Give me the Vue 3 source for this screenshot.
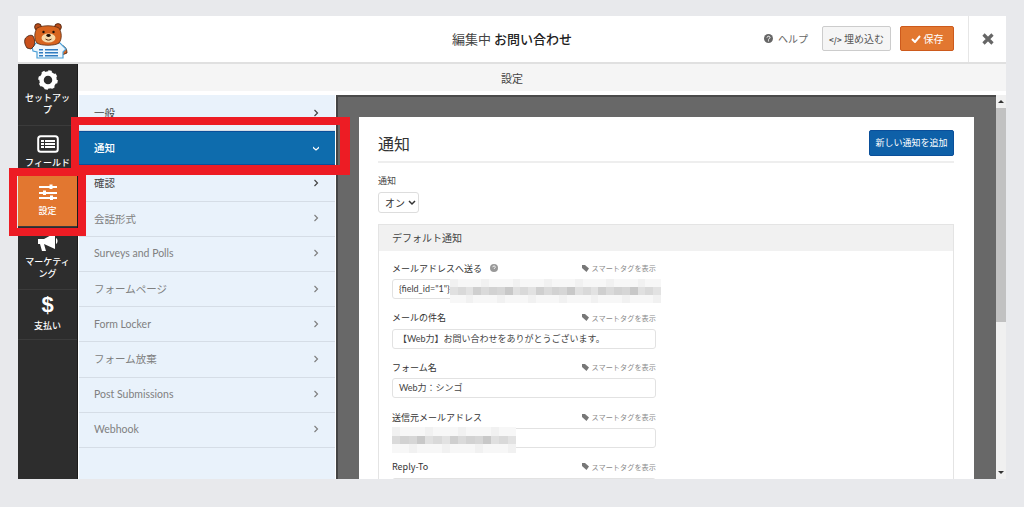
<template>
  <div class="frame">
    <header class="topbar">
      <div class="logo">
        <svg width="44" height="38" viewBox="0 0 44 38">
          <path d="M37 23c4 1 6 4 6 8l-5 2z" fill="#d8641f" stroke="#3d1d0d" stroke-width=".8" />
          <path d="M12 21h24l6 6-3 3v6H13v-6l-4-1-1-4z" fill="#eef7fd" stroke="#4b9fd6" stroke-width="1.200" />
          <path d="M3 26c-2-3-3-6-2-9 1-2 2-2 3-3 2-1 4-1 5 0 2 3 2 7 1 10l-3 3z" fill="#c9501c" stroke="#3d1d0d" stroke-width=".8" />
          <circle cx="14" cy="5" r="3.400" fill="#b94c18" stroke="#3d1d0d" stroke-width=".8" />
          <circle cx="34" cy="5" r="3.400" fill="#b94c18" stroke="#3d1d0d" stroke-width=".8" />
          <path d="M13 6c6-3 16-3 22 0 3 5 3 11 0 15-4 3-18 3-22 0-3-4-3-10 0-15z" fill="#d8641f" stroke="#5a2a10" stroke-width=".8" />
          <ellipse cx="24.500" cy="16" rx="7" ry="4.500" fill="#f8d9a8" />
          <circle cx="19.500" cy="10" r="1.200" fill="#1d1008" />
          <circle cx="29.500" cy="10" r="1.200" fill="#1d1008" />
          <ellipse cx="24.500" cy="13.500" rx="2.200" ry="1.400" fill="#1d1008" />
          <path d="M21.500 17c2 1.500 4 1.500 6 0" fill="none" stroke="#5a2a10" stroke-width="1" />
          <path d="M15 27h4v1.500h-4zM21 27h13v1.500H21zM15 30h4v1.500h-4zM21 30h13v1.500H21zM15 33h4v1.500h-4zM21 33h13v1.500H21z" fill="#2f7cc1" />
        </svg>
      </div>
      <h1 class="form-title"><span class="editing">編集中</span> お問い合わせ</h1>
      <div class="actions">
        <span class="help">
          <svg width="9" height="9" viewBox="0 0 10 10">
            <circle cx="5" cy="5" r="5" fill="#666" />
            <path d="M3.400 4c0-2 3.400-2 3.300 0 0 1.200-1.700 1-1.700 2.200" fill="none" stroke="#fff" stroke-width="1.100" />
            <rect x="4.400" y="7" width="1.200" height="1.200" fill="#fff" />
          </svg>
          ヘルプ
        </span>
        <button class="btn-embed"><b>&lt;/&gt;</b> 埋め込む</button>
        <button class="btn-save">
          <svg width="10" height="8" viewBox="0 0 10 8"><path d="M1 4l3 3 5-6" fill="none" stroke="#fff" stroke-width="2" /></svg>
          保存
        </button>
      </div>
      <div class="close">
        <svg width="12" height="12" viewBox="0 0 12 12"><path d="M1.500 1.500l9 9M10.500 1.500l-9 9" stroke="#666" stroke-width="3.200" /></svg>
      </div>
    </header>

    <div class="workspace">
      <nav class="sidebar">
        <div class="side-item setup">
          <svg width="20" height="20" viewBox="0 0 20 20">
            <circle cx="10" cy="10" r="6.500" fill="none" stroke="#fff" stroke-width="4.500" />
            <circle cx="10" cy="10" r="8.600" fill="none" stroke="#fff" stroke-width="2.400" stroke-dasharray="3.400 3.350" />
          </svg>
          <span>セットアップ</span>
        </div>
        <div class="side-item fields">
          <svg width="22" height="18" viewBox="0 0 22 18">
            <rect x="1.200" y="1.200" width="19.600" height="15.600" rx="2.500" fill="#2d2d2d" stroke="#fff" stroke-width="2" />
            <path d="M4 5h3v2H4zM8 5h10v2H8zM4 8h3v2H4zM8 8h10v2H8zM4 11h3v2H4zM8 11h10v2H8z" fill="#fff" />
          </svg>
          <span>フィールド</span>
        </div>
        <div class="side-item active">
          <svg width="18" height="17" viewBox="0 0 18 17">
            <path d="M0 2h18v2H0zM0 8h18v2H0zM0 13h18v2H0z" fill="#fff" />
            <path d="M10.500 .5h3v4.500h-3zM4 6.500h3V11H4zM11 11.500h3V16h-3z" fill="#fff" />
          </svg>
          <span>設定</span>
        </div>
        <div class="side-item marketing">
          <svg width="22" height="20" viewBox="0 0 22 20">
            <path d="M1 7h6L18 1v16L7 12H1zM3 12h4l2 7H5zM19 6c2 1 2 5 0 6z" fill="#fff" />
          </svg>
          <span>マーケティング</span>
        </div>
        <div class="side-item payments">
          <b class="dollar">$</b>
          <span>支払い</span>
        </div>
      </nav>

      <div class="main">
        <div class="subbar">設定</div>
        <div class="split">
          <aside class="panel-list">
            <div
              v-for="item in sections"
              :key="item.label"
              class="section-row"
              :class="{ current: item.current, strong: item.strong }"
            >
              <span>{{ item.label }}</span>
              <svg width="6" height="8" viewBox="0 0 6 8">
                <path v-if="item.current" d="M-1 2.500l4 3.500 4-3.500" fill="none" stroke="#fff" stroke-width="1.200" />
                <path v-else d="M1.500 1l3 3-3 3" fill="none" stroke="currentColor" stroke-width="1.200" />
              </svg>
            </div>
          </aside>

          <section class="canvas">
            <div class="sheet">
              <div class="sheet-head">
                <h2>通知</h2>
                <button class="btn-add">新しい通知を追加</button>
              </div>
              <label class="small-label">通知</label>
              <div class="select">オン
                <svg width="8" height="6" viewBox="0 0 8 6"><path d="M1 1l3 3 3-3" fill="none" stroke="#333" stroke-width="1.500" /></svg>
              </div>
              <div class="notify-box">
                <div class="notify-title">デフォルト通知</div>
                <div class="notify-body">
                  <div v-for="field in fields" :key="field.label" class="field">
                    <div class="field-top">
                      <span class="field-label">
                        {{ field.label }}
                        <svg v-if="field.hint" class="hint" width="8" height="8" viewBox="0 0 10 10">
                          <circle cx="5" cy="5" r="5" fill="#999" />
                          <path d="M3.400 4c0-2 3.400-2 3.300 0 0 1.200-1.700 1-1.700 2.200" fill="none" stroke="#fff" stroke-width="1.100" />
                        </svg>
                      </span>
                      <span class="smart">
                        <svg width="8" height="7" viewBox="0 0 8 7"><path d="M0 0h3l4 3.500L4.500 7 0 3z" fill="#777" /></svg>
                        スマートタグを表示
                      </span>
                    </div>
                    <div class="input" :class="{ indented: field.indented }">
                      {{ field.value }}
                      <div v-if="field.mosaic" class="mosaic" :class="field.mosaic">
                        <i
                          v-for="(shade, i) in mosaicCells(field.mosaic)"
                          :key="i"
                          :style="{ background: shade }"
                        ></i>
                      </div>
                    </div>
                  </div>
                </div>
              </div>
            </div>
          </section>

          <div class="scrollbar">
            <span class="arrow up"></span>
            <span class="thumb"></span>
            <span class="arrow down"></span>
          </div>
        </div>
      </div>
    </div>

    <div class="mark mark-row"></div>
    <div class="mark mark-side"></div>
  </div>
</template>

<script setup>
const sections = [
  { label: '一般', strong: true },
  { label: '通知', current: true },
  { label: '確認', strong: true },
  { label: '会話形式' },
  { label: 'Surveys and Polls' },
  { label: 'フォームページ' },
  { label: 'Form Locker' },
  { label: 'フォーム放棄' },
  { label: 'Post Submissions' },
  { label: 'Webhook' }
]

const fields = [
  { label: 'メールアドレスへ送る', hint: true, value: '{field_id="1"}', mosaic: 'wide' },
  { label: 'メールの件名', value: '【Web力】お問い合わせをありがとうございます。', indented: true },
  { label: 'フォーム名', value: 'Web力：シンゴ' },
  { label: '送信元メールアドレス', value: '', mosaic: 'narrow' },
  { label: 'Reply-To', value: '' }
]

// pixelated blur over the addresses
const shades = ['#d2d2d2', '#e2e2e2', '#c8c8c8', '#dadada', '#d9d9d9', '#d6d6d6', '#cfcfcf', '#e0e0e0']
const mosaicCells = (kind) => {
  const count = kind === 'wide' ? 81 : 45
  return Array.from({ length: count }, (_, i) => {
    const row = Math.floor(i / (count / 3))
    if (row !== 1) return i % 4 === 0 ? '#f1f1f1' : '#f7f7f7'
    return shades[(i * 5) % shades.length]
  })
}
</script>

<style>
html, body {
  margin: 0;
  height: 100%;
  overflow: hidden;
  background: #e8e9ec;
}
</style>

<style scoped>
* {
  box-sizing: border-box;
}

.frame {
  position: relative;
  width: 988px;
  height: 463px;
  margin: 16px 0 0 18px;
  background: #fff;
  font-family: "Noto Sans CJK JP", "Open Sans", sans-serif;
  color: #444;
  overflow: visible;
}

.topbar {
  display: flex;
  align-items: center;
  position: relative;
  height: 48px;
  background: #fff;
  border-bottom: 2px solid #e0e0e0;
}

.logo {
  width: 60px;
  padding: 4px 0 0 6px;
  display: flex;
}

.form-title {
  position: absolute;
  left: 0;
  right: 0;
  margin: 0;
  padding-bottom: 2px;
  text-align: center;
  font-size: 13px;
  font-weight: 500;
  color: #222;
}

.editing {
  font-weight: 400;
  color: #444;
}

.actions {
  position: relative;
  margin-left: auto;
  display: flex;
  align-items: center;
  height: 100%;
  padding: 0 14px 1px 0;
}

.help {
  display: flex;
  align-items: center;
  gap: 5px;
  font-size: 10px;
  color: #666;
  margin-right: 14px;
}

.btn-embed,
.btn-save {
  height: 25px;
  font-family: inherit;
  font-size: 10px;
  border-radius: 2px;
  padding: 0;
}

.btn-embed {
  width: 69px;
  background: #f5f5f5;
  border: 1px solid #ccc;
  color: #555;
  margin-right: 9px;
}

.btn-embed b {
  font-size: 8px;
}

.btn-save {
  width: 54px;
  background: #e27730;
  border: 1px solid #cd5a1c;
  color: #fff;
  display: flex;
  align-items: center;
  justify-content: center;
  gap: 3px;
}

.close {
  position: relative;
  width: 38px;
  height: 100%;
  border-left: 1px solid #e6e6e6;
  display: flex;
  align-items: center;
  justify-content: center;
}

.workspace {
  display: flex;
  height: 415px;
}

.sidebar {
  width: 60px;
  flex: none;
  background: #2d2d2d;
  border-right: 1px solid #1c1c1c;
  display: flex;
  flex-direction: column;
}

.side-item {
  display: flex;
  flex-direction: column;
  align-items: center;
  padding-top: 6px;
  border-bottom: 1px solid #3b3b3b;
  color: #fff;
  font-size: 9px;
  font-weight: 500;
  line-height: 12px;
  text-align: center;
}

.side-item span {
  margin-top: 2px;
  width: 50px;
}

.setup { height: 62px; }
.fields { height: 50px; padding-top: 9px; }
.active { height: 51px; background: #e27730; padding-top: 8px; }
.marketing { height: 63px; padding-top: 5px; }
.payments { height: 50px; padding-top: 2px; }

.fields span {
  margin-top: 4px;
}

.active span {
  margin-top: 4px;
}

.marketing span {
  margin-top: 4px;
}

.dollar {
  font-family: "Liberation Sans", sans-serif;
  font-size: 22px;
  line-height: 26px;
}

.main {
  flex: 1;
  display: flex;
  flex-direction: column;
  min-width: 0;
}

.subbar {
  height: 27px;
  padding-right: 60px;
  background: #f5f5f5;
  text-align: center;
  font-size: 11px;
  line-height: 28px;
  color: #444;
}

.split {
  display: flex;
  flex: 1;
  min-height: 0;
  padding-top: 4px;
  background: #fff;
}

.panel-list {
  width: 258px;
  flex: none;
  background: #e9f2fb;
  border-left: 1px solid #fff;
  border-right: 1px solid #fff;
  padding-top: 1px;
}

.section-row {
  display: flex;
  align-items: center;
  justify-content: space-between;
  height: 35.200px;
  padding: 0 16px 1px 15px;
  border-bottom: 1px solid #d5dde6;
  font-family: "Lato", "Noto Sans CJK JP", sans-serif;
  font-size: 10.500px;
  color: #808080;
}

.section-row.strong {
  color: #444;
}

.section-row.current {
  background: #0e6cad;
  color: #fff;
  border-top: 1px solid #0a4f9a;
  border-bottom: 2px solid #0a4f9a;
  font-weight: 500;
}

.canvas {
  flex: 1;
  min-width: 0;
  background: #686868;
  border-left: 2px solid #444;
  border-top: 2px solid #4a4a4a;
  padding: 20px 22px 0 21px;
  overflow: hidden;
}

.sheet {
  height: 400px;
  background: #fff;
  padding: 0 20px 0 19px;
}

.sheet-head {
  display: flex;
  align-items: center;
  justify-content: space-between;
  height: 46px;
  padding-top: 7px;
  border-bottom: 2px solid #eee;
}

.sheet-head h2 {
  margin: 0;
  font-size: 16px;
  font-weight: 400;
  color: #333;
}

.btn-add {
  width: 85px;
  height: 26px;
  padding: 0;
  background: #0e60a8;
  border: 1px solid #0a4f9a;
  border-radius: 2px;
  color: #fff;
  font-family: inherit;
  font-size: 9px;
}

.small-label {
  display: block;
  margin-top: 11px;
  font-size: 9px;
  line-height: 14px;
  color: #444;
}

.select {
  display: flex;
  align-items: center;
  gap: 3px;
  width: 41px;
  height: 21px;
  margin-top: 4px;
  padding-left: 6px;
  border: 1px solid #ddd;
  border-radius: 3px;
  font-size: 10px;
  color: #333;
}

.notify-box {
  margin-top: 11px;
  border: 1px solid #e4e4e4;
  border-bottom: 0;
}

.notify-title {
  height: 26px;
  padding-left: 13px;
  background: #f1f1f1;
  font-size: 10px;
  line-height: 26px;
  color: #444;
}

.notify-body {
  padding: 10px 13px 0;
  width: 290px;
}

.field {
  height: 49.700px;
}

.field-top {
  display: flex;
  align-items: center;
  justify-content: space-between;
  height: 14px;
}

.field-label {
  font-size: 9px;
  color: #333;
}

.hint {
  margin-left: 6px;
}

.smart {
  display: flex;
  align-items: center;
  gap: 2px;
  font-size: 7.200px;
  color: #8a8a8a;
}

.input {
  position: relative;
  height: 20px;
  margin-top: 4px;
  padding-left: 6px;
  border: 1px solid #e2e2e2;
  border-radius: 3px;
  font-family: "Lato", "Noto Sans CJK JP", sans-serif;
  font-size: 9px;
  line-height: 18px;
  color: #444;
  white-space: nowrap;
}

.input.indented {
  padding-left: 5px;
}

.mosaic {
  position: absolute;
  display: grid;
  grid-template-rows: repeat(3, 1fr);
}

.mosaic i {
  display: block;
}

.mosaic.wide {
  left: 57px;
  top: -1px;
  width: 211px;
  height: 24px;
  grid-template-columns: repeat(27, 1fr);
}

.mosaic.narrow {
  left: -1px;
  top: -2px;
  width: 124px;
  height: 26px;
  grid-template-columns: repeat(15, 1fr);
}

.scrollbar {
  width: 10px;
  flex: none;
  background: #f0f0f0;
  display: flex;
  flex-direction: column;
  align-items: center;
}

.arrow {
  width: 0;
  height: 0;
  margin: 5px 0;
  border-left: 3px solid transparent;
  border-right: 3px solid transparent;
}

.arrow.up {
  border-bottom: 3px solid #333;
}

.arrow.down {
  margin-top: auto;
  border-top: 3px solid #333;
}

.thumb {
  width: 100%;
  height: 214px;
  background: #c1c1c1;
}

.mark {
  position: absolute;
  border-style: solid;
  border-color: #ed1c24;
  pointer-events: none;
}

.mark-row {
  left: 53px;
  top: 101px;
  width: 279px;
  height: 58px;
  border-width: 8px 10px 10px 8px;
}

.mark-side {
  left: -9px;
  top: 152px;
  width: 77px;
  height: 68px;
  border-width: 8px;
}
</style>
